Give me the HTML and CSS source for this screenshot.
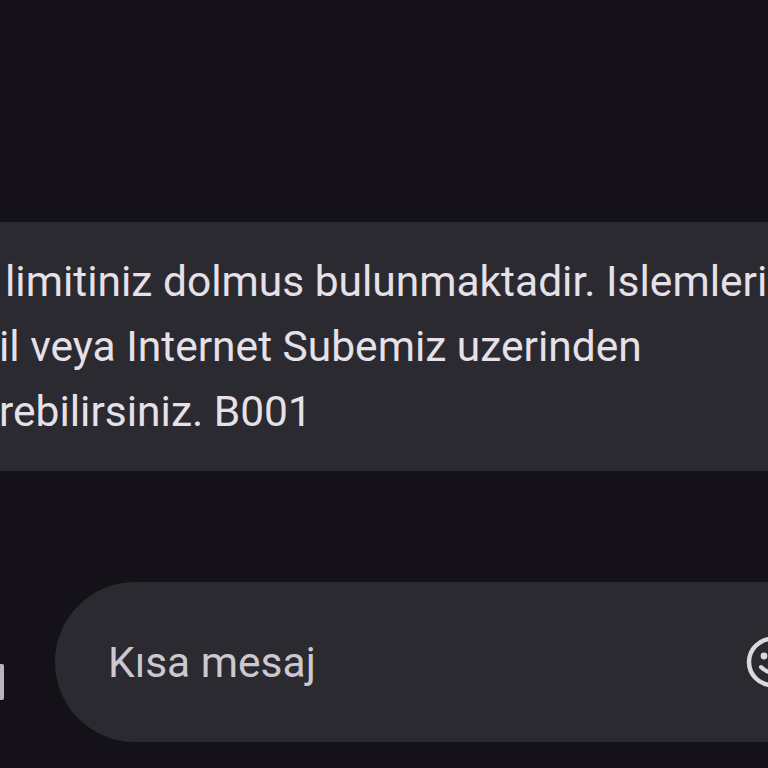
FILE: index.html
```html
<!DOCTYPE html>
<html lang="tr">
<head>
<meta charset="utf-8">
<title>Mesajlar</title>
<link rel="stylesheet" href="styles.css">
</head>
<body>
<main class="screen">
  <section class="thread">
    <div class="bubble">
      <div class="line line-1">limitiniz dolmus bulunmaktadir. Islemleri</div>
      <div class="line line-2">il veya Internet Subemiz uzerinden</div>
      <div class="line line-3">rebilirsiniz. B001</div>
    </div>
  </section>
  <footer class="composer">
    <span class="side-icon"></span>
    <div class="input-pill">
      <span class="placeholder">Kısa mesaj</span>
      <svg class="emoji-icon" width="54" height="54" viewBox="0 0 54 54" aria-hidden="true">
        <circle cx="27" cy="27" r="23" fill="none" stroke="#dcd8de" stroke-width="4.5"/>
        <circle cx="19" cy="21" r="3.4" fill="#dcd8de"/>
        <circle cx="35" cy="21" r="3.4" fill="#dcd8de"/>
        <path d="M16 32 Q27 43 38 32" fill="none" stroke="#dcd8de" stroke-width="4" stroke-linecap="round"/>
      </svg>
    </div>
  </footer>
</main>
</body>
</html>
```
FILE: styles.css
```css
* { box-sizing: border-box; }

html, body {
  margin: 0;
  padding: 0;
  width: 768px;
  height: 768px;
  overflow: hidden;
  background: #141218;
}

.screen {
  width: 768px;
  height: 768px;
  display: flex;
  flex-direction: column;
  padding-top: 222px;
  font-family: Roboto, "Liberation Sans", sans-serif;
  overflow: hidden;
}

.thread {
  display: flex;
}

.bubble {
  flex: none;
  width: 820px;
  margin-left: -20px;
  height: 249px;
  background: #2b2a30;
  padding: 27px 0 27px 20px;
  color: #e6e1e8;
  font-size: 42.5px;
  line-height: 65px;
}

.line {
  white-space: nowrap;
}

.line-1 { padding-left: 5px; }
.line-2 { margin-left: -1px; }
.line-3 { margin-left: -1px; }

.composer {
  display: flex;
  align-items: center;
  margin-top: 111px;
  height: 160px;
}

.side-icon {
  flex: none;
  width: 4px;
  height: 36px;
  margin-top: 40px;
  border-radius: 0 2px 2px 0;
  background: #b9b5bc;
}

.input-pill {
  flex: none;
  margin-left: 51px;
  width: 758px;
  height: 160px;
  border-radius: 80px 0 0 80px;
  background: #2b2a30;
  display: flex;
  align-items: center;
  padding-left: 53px;
}

.placeholder {
  flex: 1;
  color: #cdc8cf;
  font-size: 42.5px;
  line-height: 50px;
  padding-top: 2px;
}

.emoji-icon {
  flex: none;
  margin-right: 14px;
}
```
